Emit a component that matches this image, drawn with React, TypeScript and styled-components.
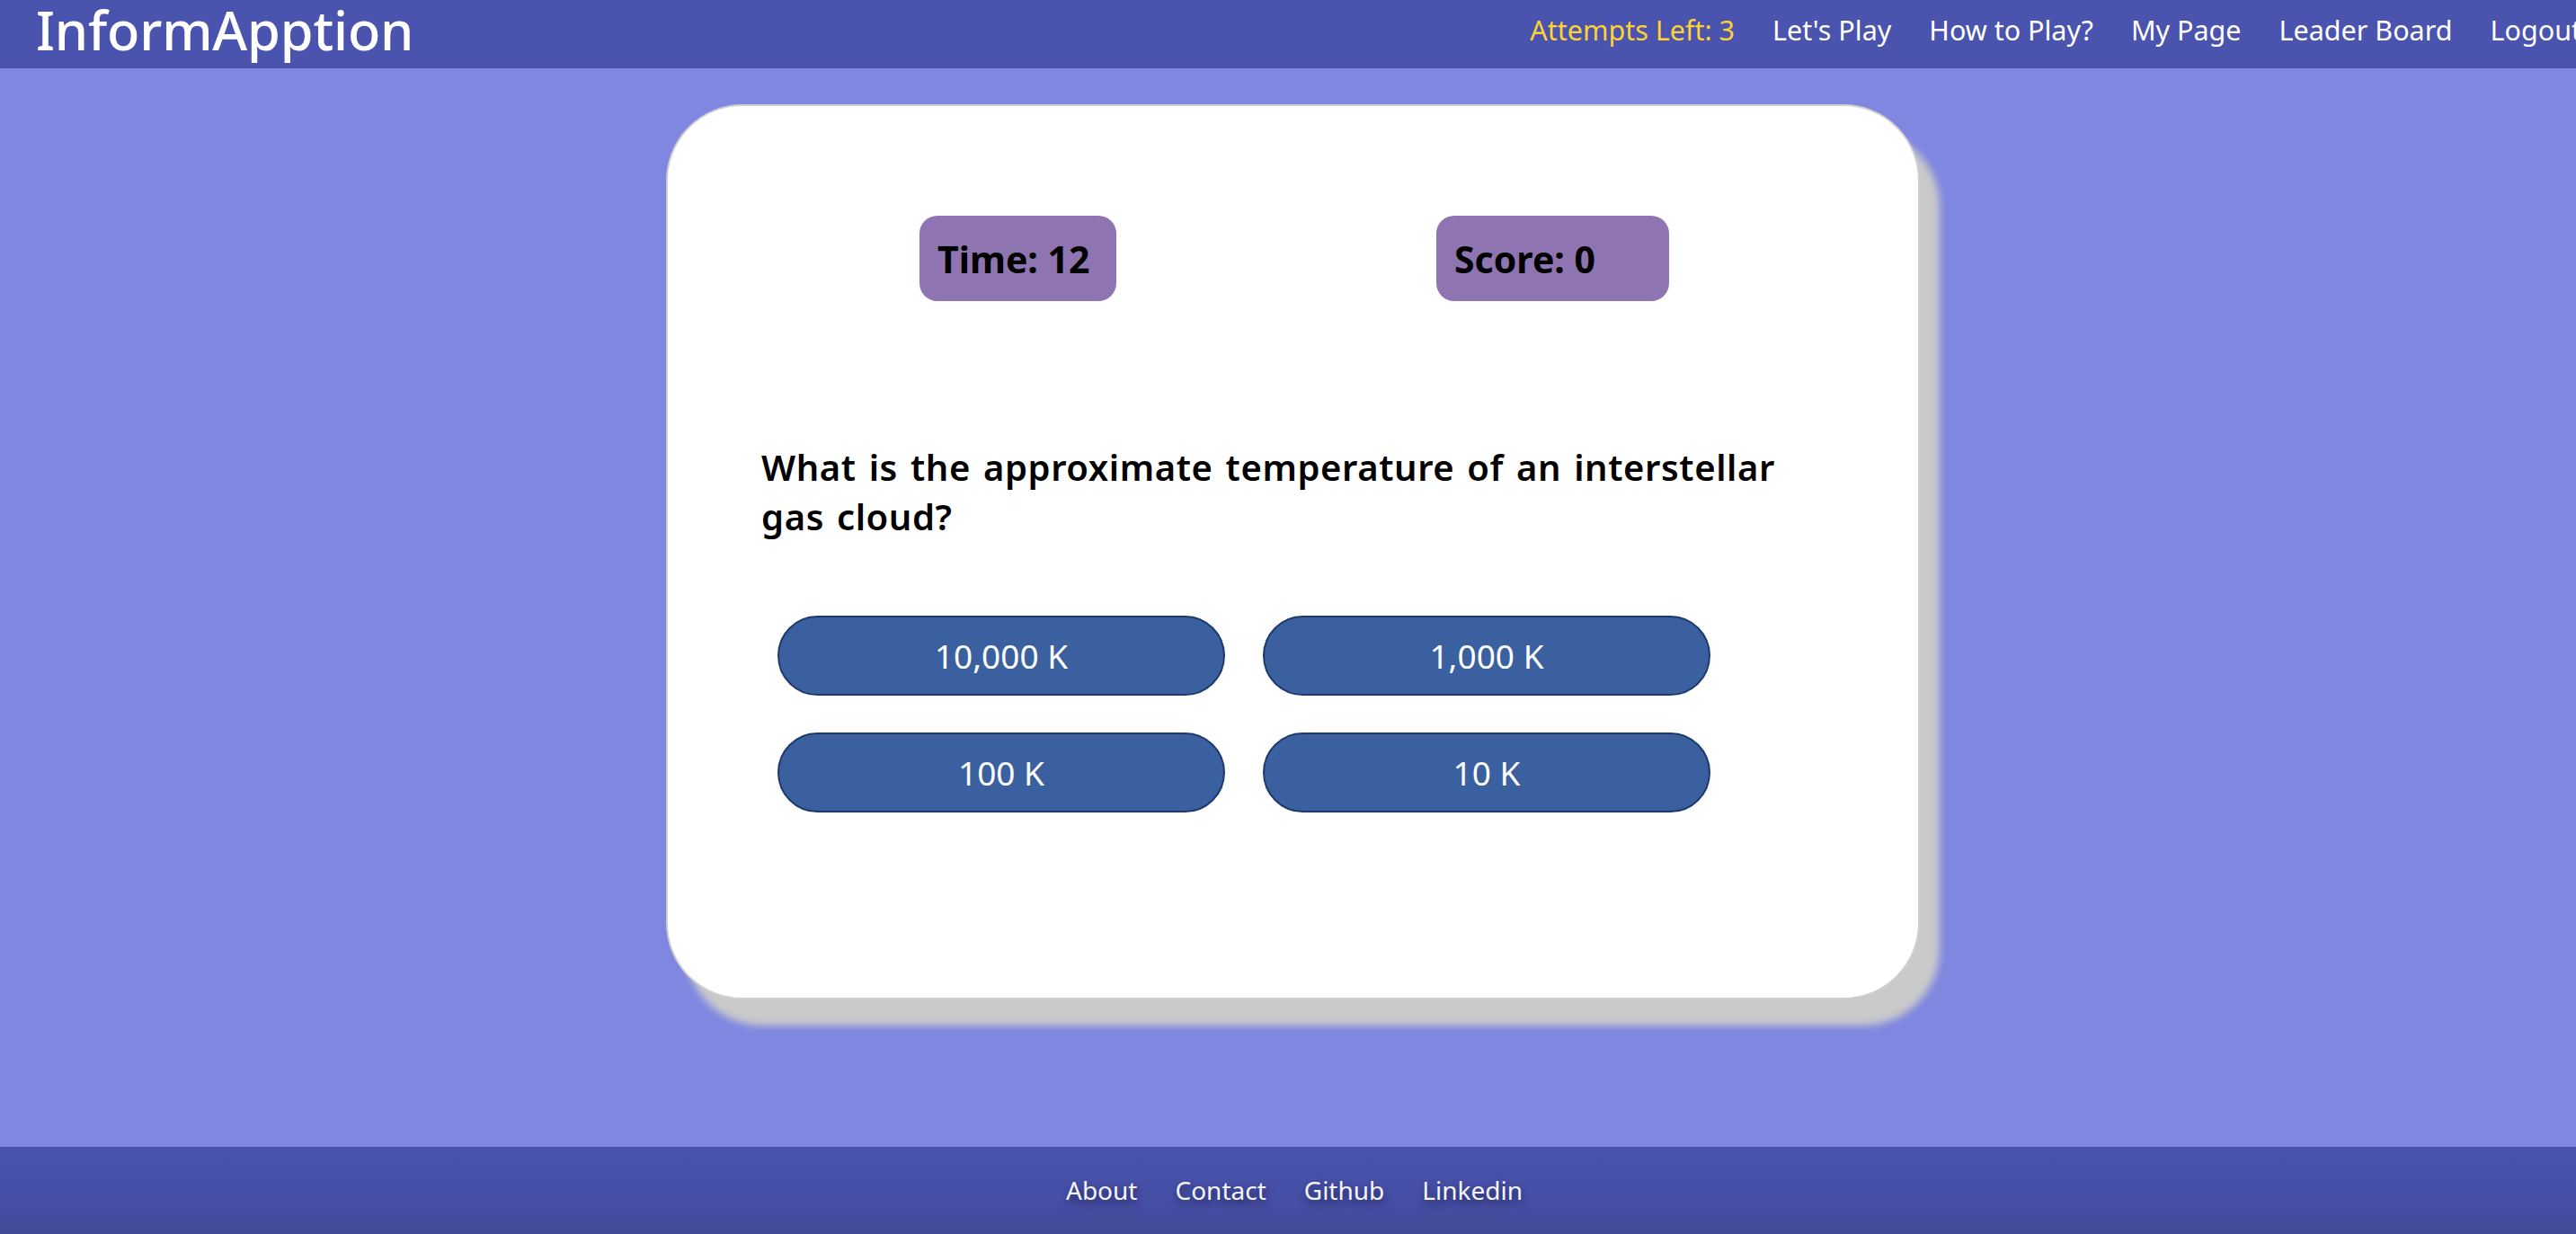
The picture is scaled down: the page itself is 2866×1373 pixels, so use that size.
import React from "react";
import styled, { createGlobalStyle } from "styled-components";

const GlobalStyle = createGlobalStyle`
  html, body {
    margin: 0;
    padding: 0;
    background: #7f87e0;
    font-family: "Noto Sans", "Open Sans", sans-serif;
  }
  * { box-sizing: border-box; }
`;

const Page = styled.div`
  min-height: 100vh;
  display: flex;
  flex-direction: column;
  background: #7f87e0;
  overflow-x: hidden;
`;

const Header = styled.header`
  height: 76px;
  background: #4a53ad;
  display: flex;
  align-items: flex-start;
  padding-left: 40px;
  white-space: nowrap;
`;

const Logo = styled.div`
  color: #fff;
  font-size: 59.5px;
  line-height: 1;
  padding-top: 3px;
  font-weight: 500;
  letter-spacing: -0.2px;
`;

const Nav = styled.nav`
  margin-left: auto;
  margin-right: -6px;
  display: flex;
  gap: 42px;
  padding-top: 13px;
`;

const NavLink = styled.a<{ $highlight?: boolean }>`
  color: ${(p) => (p.$highlight ? "#fdd236" : "#ffffff")};
  font-size: 30.5px;
  line-height: 40px;
  text-decoration: none;
  cursor: pointer;
`;

const Main = styled.main`
  flex: 1;
  display: flex;
  justify-content: center;
  align-items: flex-start;
  padding: 40px 0 0 11px;
`;

const Card = styled.section`
  width: 1395px;
  height: 996px;
  background: #fff;
  border: 2px solid #cfcfcf;
  border-radius: 85px;
  box-shadow: 22px 29px 8px #cacaca;
  padding: 122px 0 0 0;
`;

const StatsRow = styled.div`
  display: flex;
  gap: 356px;
  padding-left: 280px;
`;

const StatBox = styled.div<{ $width: number }>`
  width: ${(p) => p.$width}px;
  height: 95px;
  background: #8e74b0;
  border-radius: 20px;
  display: flex;
  align-items: center;
  padding-left: 20px;
  color: #000;
  font-size: 41px;
  font-weight: 700;
`;

const Question = styled.h2`
  margin: 157px 0 0 104px;
  width: 1180px;
  font-size: 40px;
  line-height: 55px;
  font-weight: 600;
  color: #000;
  letter-spacing: 0.6px;
  word-spacing: 3px;
`;

const Answers = styled.div`
  margin: 83px 0 0 122px;
  display: grid;
  grid-template-columns: repeat(2, 498px);
  column-gap: 42px;
  row-gap: 41px;
`;

const AnswerButton = styled.button`
  height: 89px;
  background: #3b60a0;
  border: 2px solid #1e3a6c;
  border-radius: 45px;
  color: #fff;
  font-family: "Noto Sans", "Open Sans", sans-serif;
  font-size: 37px;
  font-weight: 400;
  cursor: pointer;
  padding: 0;
`;

const Footer = styled.footer`
  height: 97px;
  background: linear-gradient(180deg, #4a53ad 0%, #464fa6 60%, #424996 100%);
  display: flex;
  justify-content: center;
  gap: 42px;
  padding: 28px 0 0 14px;
`;

const FooterLink = styled.a`
  color: #f4f4fb;
  font-size: 28px;
  line-height: 40px;
  text-decoration: none;
  text-shadow: 1px 4px 8px rgba(20, 20, 60, 0.75);
  cursor: pointer;
`;

const navItems = ["Let's Play", "How to Play?", "My Page", "Leader Board", "Logout"];
const answers = ["10,000 K", "1,000 K", "100 K", "10 K"];
const footerItems = ["About", "Contact", "Github", "Linkedin"];

export default function App() {
  return (
    <>
      <GlobalStyle />
      <Page>
        <Header>
          <Logo>InformApption</Logo>
          <Nav>
            <NavLink $highlight>Attempts Left: 3</NavLink>
            {navItems.map((n) => (
              <NavLink key={n}>{n}</NavLink>
            ))}
          </Nav>
        </Header>
        <Main>
          <Card>
            <StatsRow>
              <StatBox $width={219}>Time: 12</StatBox>
              <StatBox $width={259}>Score: 0</StatBox>
            </StatsRow>
            <Question>
              What is the approximate temperature of an interstellar gas cloud?
            </Question>
            <Answers>
              {answers.map((a) => (
                <AnswerButton key={a}>{a}</AnswerButton>
              ))}
            </Answers>
          </Card>
        </Main>
        <Footer>
          {footerItems.map((f) => (
            <FooterLink key={f}>{f}</FooterLink>
          ))}
        </Footer>
      </Page>
    </>
  );
}
